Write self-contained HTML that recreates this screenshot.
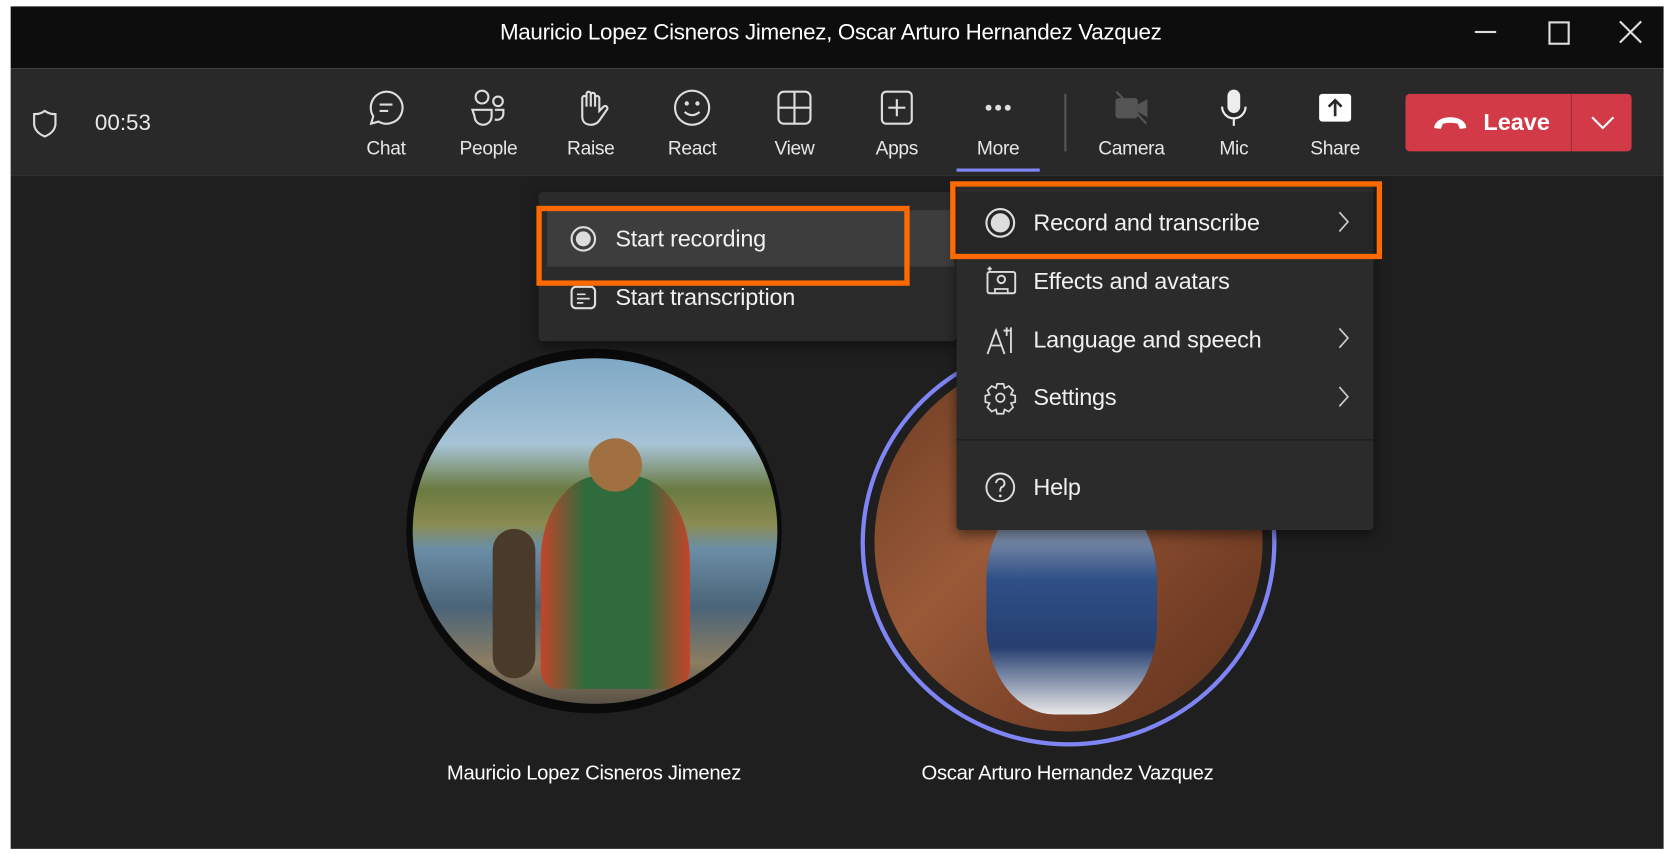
<!DOCTYPE html>
<html><head><meta charset="utf-8"><style>
html,body{margin:0;padding:0;width:1672px;height:854px;overflow:hidden;background:#fff;font-family:"Liberation Sans",sans-serif;}
#s{position:absolute;left:0;top:0;width:1568px;height:801px;transform:scale(1.0664);transform-origin:0 0;}
.a{position:absolute;}
.t{color:#fff;white-space:nowrap;}
.lbl{position:absolute;top:129px;width:90px;margin-left:-45px;text-align:center;color:#e6e6e6;font-size:18px;letter-spacing:-0.3px}
.ic{position:absolute;top:83px;width:36px;height:36px;margin-left:-18px;}
.mi{position:absolute;left:72px;font-size:22px;color:#f0f0f0;letter-spacing:-0.2px}
.mic{position:absolute;left:26px;width:30px;height:30px;}
.chev{position:absolute;left:356px;width:14px;height:22px;}
svg{overflow:visible}
</style></head><body><div id="s">
<div class="a" style="left:10px;top:6px;width:1550px;height:58px;background:#0d0d0d"></div>
<div class="a t" style="left:10px;width:1538px;top:19px;text-align:center;font-size:21px;letter-spacing:-0.3px">Mauricio Lopez Cisneros Jimenez, Oscar Arturo Hernandez Vazquez</div>
<div class="a" style="left:1383px;top:29px;width:20px;height:2px;background:#ddd"></div>
<div class="a" style="left:1452px;top:20px;width:16px;height:18px;border:2px solid #ddd"></div>
<svg class="a" style="left:1518px;top:19px" width="22" height="22"><path d="M1 1L21 21M21 1L1 21" stroke="#ddd" stroke-width="2"/></svg>
<div class="a" style="left:10px;top:64px;width:1550px;height:101px;background:#292929"></div>
<div class="a" style="left:10px;top:165px;width:1550px;height:631px;background:#1f1f1f"></div>
<svg class="a" style="left:30px;top:102px" width="24" height="28"><path d="M12 2C8 5 5 5 2 5V14C2 20 7 24 12 26C17 24 22 20 22 14V5C19 5 16 5 12 2Z" fill="none" stroke="#ddd" stroke-width="2"/></svg>
<div class="a t" style="left:89px;top:104px;font-size:21px;color:#e8e8e8">00:53</div>

<svg class="ic" style="left:362px" viewBox="0 0 36 36"><path d="M18 3a15 15 0 1 1-7 28l-7 2 2-7A15 15 0 0 1 18 3z" fill="none" stroke="#ddd" stroke-width="2"/><path d="M12 15h12M12 21h8" stroke="#ddd" stroke-width="2"/></svg>
<svg class="ic" style="left:458px" viewBox="0 0 36 36"><circle cx="12" cy="8" r="6" fill="none" stroke="#ddd" stroke-width="2"/><circle cx="27" cy="12" r="4.5" fill="none" stroke="#ddd" stroke-width="2"/><path d="M3 20h18v6a8 8 0 0 1-16 0zM24 20h8v4a6 6 0 0 1-8 5" fill="none" stroke="#ddd" stroke-width="2"/></svg>
<svg class="ic" style="left:554px" viewBox="0 0 36 36"><path d="M10 20V9a2 2 0 0 1 4 0v8V5a2 2 0 0 1 4 0v12V6a2 2 0 0 1 4 0v11V9a2 2 0 0 1 4 0v12l4-4a2 2 0 0 1 3 3l-7 10c-2 3-5 4-8 4-5 0-8-3-8-8z" fill="none" stroke="#ddd" stroke-width="2"/></svg>
<svg class="ic" style="left:649px" viewBox="0 0 36 36"><circle cx="18" cy="18" r="16" fill="none" stroke="#ddd" stroke-width="2"/><circle cx="13" cy="14" r="2" fill="#ddd"/><circle cx="23" cy="14" r="2" fill="#ddd"/><path d="M11 22q7 6 14 0" fill="none" stroke="#ddd" stroke-width="2"/></svg>
<svg class="ic" style="left:745px" viewBox="0 0 36 36"><rect x="3" y="3" width="30" height="30" rx="5" fill="none" stroke="#ddd" stroke-width="2"/><path d="M18 3v30M3 18h30" stroke="#ddd" stroke-width="2"/></svg>
<svg class="ic" style="left:841px" viewBox="0 0 36 36"><rect x="4" y="3" width="28" height="30" rx="4" fill="none" stroke="#ddd" stroke-width="2"/><path d="M18 10v16M10 18h16" stroke="#ddd" stroke-width="2"/></svg>
<svg class="ic" style="left:936px" viewBox="0 0 36 36"><circle cx="9" cy="18" r="2.8" fill="#ddd"/><circle cx="18" cy="18" r="2.8" fill="#ddd"/><circle cx="27" cy="18" r="2.8" fill="#ddd"/></svg>
<div class="a" style="left:998px;top:88px;width:2px;height:54px;background:#555"></div>
<svg class="ic" style="left:1061px" viewBox="0 0 36 36"><rect x="3" y="9" width="21" height="19" rx="3" fill="#555"/><path d="M24 15l9-5v17l-9-5z" fill="#555"/><path d="M4 3l28 30" stroke="#555" stroke-width="2"/></svg>
<svg class="ic" style="left:1157px" viewBox="0 0 36 36"><rect x="12" y="1" width="12" height="22" rx="6" fill="#eee"/><path d="M7 17a11 11 0 0 0 22 0M18 28v7" fill="none" stroke="#eee" stroke-width="2"/></svg>
<svg class="ic" style="left:1252px" viewBox="0 0 36 36"><rect x="3" y="5" width="30" height="26" rx="3" fill="#fff"/><path d="M18 26V11M12 17l6-6 6 6" fill="none" stroke="#292929" stroke-width="2.5"/></svg>
<div class="lbl" style="left:362px">Chat</div><div class="lbl" style="left:458px">People</div><div class="lbl" style="left:554px">Raise</div><div class="lbl" style="left:649px">React</div><div class="lbl" style="left:745px">View</div><div class="lbl" style="left:841px">Apps</div><div class="lbl" style="left:936px">More</div><div class="lbl" style="left:1061px">Camera</div><div class="lbl" style="left:1157px">Mic</div><div class="lbl" style="left:1252px">Share</div>
<div class="a" style="left:897px;top:158px;width:78px;height:3px;background:#7f85f5"></div>

<div class="a" style="left:1318px;top:88px;width:212px;height:54px;background:#d13a46;border-radius:4px"></div>
<div class="a" style="left:1473px;top:88px;width:1px;height:54px;background:#a02a33"></div>
<svg class="a" style="left:1343px;top:106px" width="34" height="18"><path d="M2 14c0-6 7-10 15-10s15 4 15 10l-6 1-2-5c-4-1-10-1-14 0l-2 5z" fill="#fff"/></svg>
<div class="a t" style="left:1391px;top:102px;font-size:22px;font-weight:bold">Leave</div>
<svg class="a" style="left:1492px;top:108px" width="22" height="14"><path d="M1 2l10 10 10-10" fill="none" stroke="#fff" stroke-width="2"/></svg>

<div class="a" style="left:381px;top:327px;width:352px;height:342px;border-radius:50%;background:#0a0a0a"></div>
<div class="a" style="left:387px;top:336px;width:342px;height:324px;border-radius:50%;overflow:hidden;background:linear-gradient(180deg,#7fa9c6 0%,#a6c3d6 25%,#6a7a40 38%,#8a8b50 48%,#6b8ea6 55%,#4b6478 72%,#8b7d62 88%,#5a5246 100%)">
 <div class="a" style="left:120px;top:110px;width:140px;height:200px;border-radius:40% 40% 10% 10%;background:linear-gradient(90deg,#c3452a 0%,#2f6b3c 30%,#2f6b3c 70%,#c3452a 100%)"></div>
 <div class="a" style="left:165px;top:75px;width:50px;height:50px;border-radius:50%;background:#a07040"></div>
 <div class="a" style="left:75px;top:160px;width:40px;height:140px;border-radius:20px;background:#4a3a2a"></div>
</div>
<div class="a" style="left:807px;top:318px;width:382px;height:374px;border-radius:50%;border:4px solid #7f85f5"></div>
<div class="a" style="left:820px;top:330px;width:364px;height:356px;border-radius:50%;overflow:hidden;background:linear-gradient(135deg,#6a3a22,#9a5a38 40%,#7a4228 70%,#5e301c)">
 <div class="a" style="left:105px;top:130px;width:160px;height:210px;border-radius:40%;background:linear-gradient(180deg,#cfcfcf 0%,#2e4f86 40%,#263f70 70%,#e8e8e8 100%)"></div>
</div>
<div class="a t" style="left:557px;top:715px;transform:translateX(-50%);font-size:19px;letter-spacing:-0.3px">Mauricio Lopez Cisneros Jimenez</div>
<div class="a t" style="left:1001px;top:715px;transform:translateX(-50%);font-size:19px;letter-spacing:-0.3px">Oscar Arturo Hernandez Vazquez</div>

<div class="a" style="left:505px;top:180px;width:392px;height:140px;background:#2b2b2b;border-radius:4px;box-shadow:0 4px 12px rgba(0,0,0,.5)">
 <div class="a" style="left:8px;top:17px;width:382px;height:53px;background:#3d3d3d"></div>
 <svg class="a" style="left:29px;top:31px" width="26" height="26"><circle cx="13" cy="13" r="11" fill="none" stroke="#ddd" stroke-width="2"/><circle cx="13" cy="13" r="7" fill="#ddd"/></svg>
 <div class="mi" style="top:31px">Start recording</div>
 <svg class="a" style="left:29px;top:86px" width="26" height="26"><rect x="2" y="3" width="22" height="20" rx="4" fill="none" stroke="#ddd" stroke-width="2"/><path d="M7 10h8M7 14h12M7 18h6" stroke="#ddd" stroke-width="1.6"/></svg>
 <div class="mi" style="top:86px">Start transcription</div>
</div>
<div class="a" style="left:503px;top:193px;width:340px;height:65px;border:5px solid #ff6a00"></div>

<div class="a" style="left:897px;top:172px;width:391px;height:325px;background:#2b2b2b;border-radius:4px;box-shadow:0 4px 12px rgba(0,0,0,.5)">
 <div class="a" style="left:0;top:8px;width:391px;height:58px;background:#262626"></div>
 <svg class="mic" style="top:22px" viewBox="0 0 30 30"><circle cx="15" cy="15" r="13" fill="none" stroke="#ddd" stroke-width="2"/><circle cx="15" cy="15" r="9" fill="#ddd"/></svg>
 <div class="mi" style="top:24px">Record and transcribe</div>
 <svg class="chev" style="top:25px"><path d="M3 2l8 9-8 9" fill="none" stroke="#ccc" stroke-width="1.6"/></svg>
 <svg class="mic" style="top:77px" viewBox="0 0 30 30"><rect x="3" y="6" width="26" height="20" rx="2" fill="none" stroke="#ddd" stroke-width="1.8"/><circle cx="16" cy="13" r="3.5" fill="none" stroke="#ddd" stroke-width="1.8"/><path d="M10 26v-4h12v4M3 3h4M5 1v4" fill="none" stroke="#ddd" stroke-width="1.6"/></svg>
 <div class="mi" style="top:79px">Effects and avatars</div>
 <svg class="mic" style="top:132px" viewBox="0 0 30 30"><path d="M3 28L11 6l8 22M6 20h10M18 6h6M21 3v8M25 3v24" fill="none" stroke="#ddd" stroke-width="1.7"/></svg>
 <div class="mi" style="top:134px">Language and speech</div>
 <svg class="chev" style="top:134px"><path d="M3 2l8 9-8 9" fill="none" stroke="#ccc" stroke-width="1.6"/></svg>
 <svg class="mic" style="top:186px" viewBox="0 0 30 30"><path d="M12 2h6l1 4 4-2 4 4-2 4 4 1v6l-4 1 2 4-4 4-4-2-1 4h-6l-1-4-4 2-4-4 2-4-4-1v-6l4-1-2-4 4-4 4 2z" fill="none" stroke="#ddd" stroke-width="1.6"/><circle cx="15" cy="15" r="4" fill="none" stroke="#ddd" stroke-width="1.6"/></svg>
 <div class="mi" style="top:188px">Settings</div>
 <svg class="chev" style="top:189px"><path d="M3 2l8 9-8 9" fill="none" stroke="#ccc" stroke-width="1.6"/></svg>
 <div class="a" style="left:0;top:240px;width:391px;height:1px;background:#1a1a1a"></div>
 <svg class="mic" style="top:270px" viewBox="0 0 30 30"><circle cx="15" cy="15" r="13" fill="none" stroke="#ddd" stroke-width="1.8"/><path d="M11 11a4 4 0 1 1 5 4c-1 1-1 2-1 4" fill="none" stroke="#ddd" stroke-width="1.8"/><circle cx="15" cy="23" r="1.3" fill="#ddd"/></svg>
 <div class="mi" style="top:272px">Help</div>
</div>
<div class="a" style="left:891px;top:170px;width:395px;height:63px;border:5px solid #ff6a00"></div>
</div></body></html>
